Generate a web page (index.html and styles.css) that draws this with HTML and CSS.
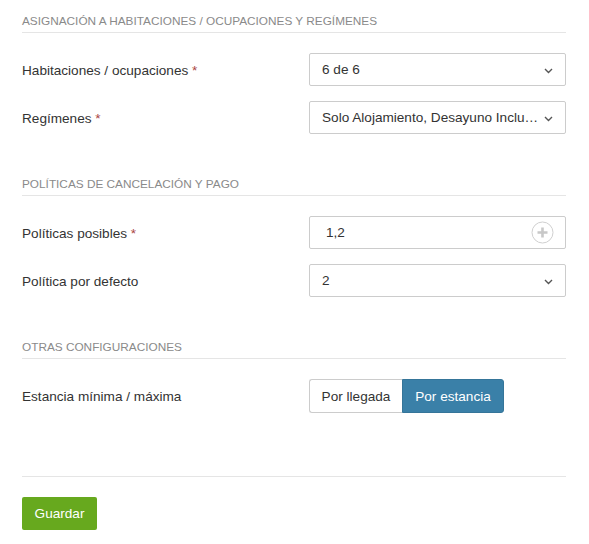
FILE: index.html
```html
<!DOCTYPE html>
<html lang="es">
<head>
<meta charset="utf-8">
<link rel="stylesheet" href="styles.css">
</head>
<body>
<div class="page">
  <div class="section-title first">Asignación a habitaciones / ocupaciones y regímenes</div>
  <div class="row">
    <label class="label">Habitaciones / ocupaciones <span class="req">*</span></label>
    <div class="control select"><span class="val">6 de 6</span><svg class="chev" width="9" height="6" viewBox="0 0 9 6"><path d="M1 1l3.5 3.5L8 1" fill="none" stroke="#555" stroke-width="1.4"/></svg></div>
  </div>
  <div class="row">
    <label class="label">Regímenes <span class="req">*</span></label>
    <div class="control select"><span class="val">Solo Alojamiento, Desayuno Incluido, Media Pensión</span><svg class="chev" width="9" height="6" viewBox="0 0 9 6"><path d="M1 1l3.5 3.5L8 1" fill="none" stroke="#555" stroke-width="1.4"/></svg></div>
  </div>

  <div class="section-title">Políticas de cancelación y pago</div>
  <div class="row">
    <label class="label">Políticas posibles <span class="req">*</span></label>
    <div class="control input"><span class="val">1,2</span><svg class="plus" width="23" height="23" viewBox="0 0 23 23"><circle cx="11.5" cy="11.5" r="10.5" fill="#fff" stroke="#d0d0d0" stroke-width="1"/><path d="M11.5 6.5v10M6.5 11.5h10" stroke="#c8c8c8" stroke-width="2.6"/></svg></div>
  </div>
  <div class="row">
    <label class="label">Política por defecto</label>
    <div class="control select"><span class="val">2</span><svg class="chev" width="9" height="6" viewBox="0 0 9 6"><path d="M1 1l3.5 3.5L8 1" fill="none" stroke="#555" stroke-width="1.4"/></svg></div>
  </div>

  <div class="section-title">Otras configuraciones</div>
  <div class="row">
    <label class="label">Estancia mínima / máxima</label>
    <div class="btn-group">
      <button class="seg">Por llegada</button>
      <button class="seg active">Por estancia</button>
    </div>
  </div>

  <div class="footer">
    <button class="save">Guardar</button>
  </div>
</div>
</body>
</html>
```

FILE: styles.css
```css
* { box-sizing: border-box; }
html, body { margin: 0; padding: 0; background: #fff; }
body {
  font-family: "Liberation Sans", Arial, sans-serif;
  font-size: 13.6px;
  color: #333;
}
.page {
  width: 589px;
  padding: 0 23px 0 22px;
}
.section-title {
  font-size: 11.8px;
  line-height: 15px;
  color: #8a8a8a;
  text-transform: uppercase;
  padding-bottom: 3px;
  border-bottom: 1px solid #e5e5e5;
  margin-top: 43px;
  margin-bottom: 20px;
}
.section-title.first { margin-top: 14px; }
.row {
  display: flex;
  align-items: center;
  margin-bottom: 15px;
}
.row:last-of-type { margin-bottom: 0; }
.label {
  width: 287px;
  flex: none;
  color: #333;
  padding-top: 1px;
}
.req { color: #a94442; }
.control {
  width: 257px;
  height: 33px;
  border: 1px solid #ccc;
  border-radius: 2px;
  display: flex;
  align-items: center;
  padding: 0 12px;
  background: #fff;
}
.val {
  flex: 1;
  white-space: nowrap;
  overflow: hidden;
  text-overflow: ellipsis;
  min-width: 0;
}
.chev { flex: none; margin-left: 3px; margin-top: 2px; }
.input { padding: 0 11px 0 16px; }
.plus { flex: none; }
.btn-group { display: flex; height: 34px; }
.seg {
  font-family: inherit;
  font-size: 13.6px;
  height: 34px;
  padding: 0;
  white-space: nowrap;
  border: 1px solid #ccc;
  background: #fff;
  color: #333;
  margin: 0;
}
.seg:first-child { border-radius: 3px 0 0 3px; border-right: none; width: 93px; }
.seg.active {
  background: #3a80a8;
  border-color: #357599;
  color: #fff;
  border-radius: 0 3px 3px 0;
  width: 102px;
}
.footer {
  margin-top: 63px;
  border-top: 1px solid #e5e5e5;
  padding-top: 20px;
}
.save {
  font-family: inherit;
  font-size: 13.6px;
  height: 33px;
  width: 75px;
  border: none;
  border-radius: 2px;
  background: #67a91e;
  color: #fff;
}
```
